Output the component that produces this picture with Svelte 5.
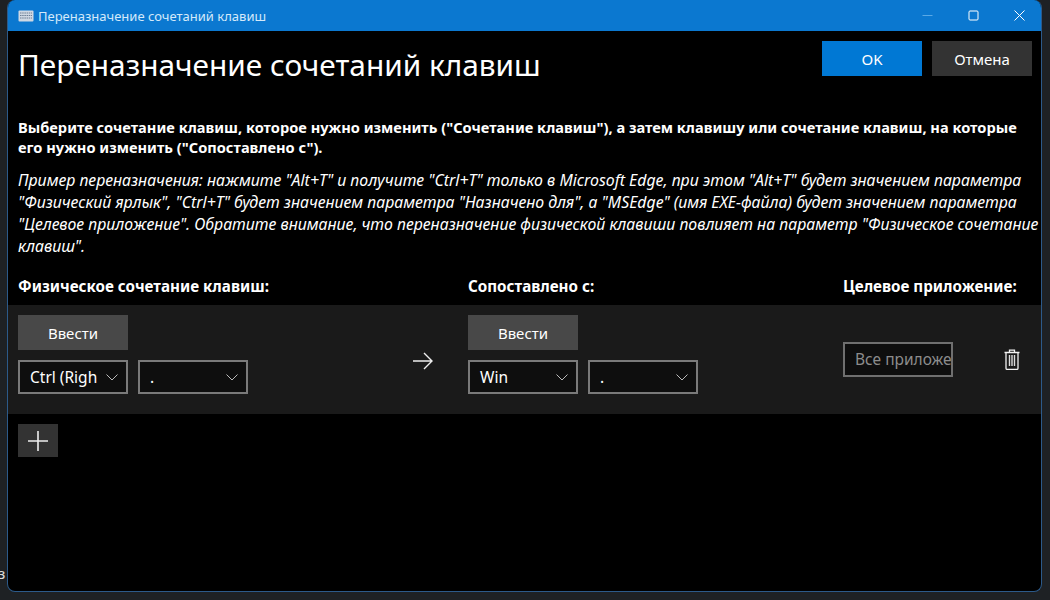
<script lang="ts">
    const rows = [
        { from: ['Ctrl (Righ', '.'], to: ['Win', '.'], app: 'Все приложения' }
    ];
</script>

<div class="desktop">
    <span class="peek">з</span>
    <div class="window">
        <header class="titlebar">
            <svg class="app-icon" width="16" height="12" viewBox="0 0 16 12">
                <rect x="0.5" y="0.5" width="15" height="11" rx="1" fill="#cfd8e3" />
                <path d="M2 3h12M2 5.5h12M2 8h12" stroke="#6d7f94" stroke-width="1" stroke-dasharray="1.5 .7" />
            </svg>
            <span class="title-text">Переназначение сочетаний клавиш</span>
            <div class="controls">
                <svg width="11" height="11" viewBox="0 0 11 11"><path d="M0.5 5.5h10" stroke="#5aa9e6" /></svg>
                <svg width="11" height="11" viewBox="0 0 11 11"><rect x="1" y="1" width="9" height="9" rx="1" fill="none" stroke="#fff" /></svg>
                <svg width="11" height="11" viewBox="0 0 11 11"><path d="M.5 .5l10 10M10.5 .5l-10 10" stroke="#fff" /></svg>
            </div>
        </header>

        <div class="content">
            <div class="head">
                <h1>Переназначение сочетаний клавиш</h1>
                <div class="actions">
                    <button class="btn primary">OK</button>
                    <button class="btn">Отмена</button>
                </div>
            </div>

            <p class="lead">Выберите сочетание клавиш, которое нужно изменить ("Сочетание клавиш"), а затем клавишу или сочетание клавиш, на которые его нужно изменить ("Сопоставлено с").</p>
            <p class="note">Пример переназначения: нажмите "Alt+T" и получите "Ctrl+T" только в Microsoft Edge, при этом "Alt+T" будет значением параметра "Физический ярлык", "Ctrl+T" будет значением параметра "Назначено для", а "MSEdge" (имя EXE-файла) будет значением параметра "Целевое приложение". Обратите внимание, что переназначение физической клавиши повлияет на параметр "Физическое сочетание клавиш".</p>

            <div class="grid labels">
                <span>Физическое сочетание клавиш:</span>
                <span></span>
                <span>Сопоставлено с:</span>
                <span>Целевое приложение:</span>
            </div>
        </div>

        {#each rows as row}
            <div class="grid band">
                <div class="keys">
                    <button class="btn enter">Ввести</button>
                    <div class="selects">
                        {#each row.from as key}
                            <div class="select">
                                <span>{key}</span>
                                <svg width="12" height="7" viewBox="0 0 12 7"><path d="M.5 .5l5.5 5.5 5.5-5.5" fill="none" stroke="#bbb" /></svg>
                            </div>
                        {/each}
                    </div>
                </div>
                <svg class="arrow" width="22" height="18" viewBox="0 0 22 18">
                    <path d="M1 9h19M12 1l8 8-8 8" fill="none" stroke="#eee" stroke-width="1.4" />
                </svg>
                <div class="keys">
                    <button class="btn enter">Ввести</button>
                    <div class="selects">
                        {#each row.to as key}
                            <div class="select">
                                <span>{key}</span>
                                <svg width="12" height="7" viewBox="0 0 12 7"><path d="M.5 .5l5.5 5.5 5.5-5.5" fill="none" stroke="#bbb" /></svg>
                            </div>
                        {/each}
                    </div>
                </div>
                <div class="target">
                    <div class="app-input"><span>{row.app}</span></div>
                    <svg class="trash" width="16" height="21" viewBox="0 0 16 21">
                        <path d="M5.5 3V1.2h5V3M0.5 3.5h15M2 4v15.2c0 .7.5 1.2 1.2 1.2h9.6c.7 0 1.2-.5 1.2-1.2V4" fill="none" stroke="#f2f2f2" stroke-width="1.3" />
                        <path d="M5.5 6v11M8 6v11M10.5 6v11" stroke="#ddd" stroke-width="1.4" />
                    </svg>
                </div>
            </div>
        {/each}

        <button class="add" aria-label="Добавить">
            <svg width="20" height="20" viewBox="0 0 20 20"><path d="M0 10h20M10 0v20" stroke="#eee" stroke-width="1.6" /></svg>
        </button>
    </div>
</div>

<style>
    :global(body) {
        margin: 0;
        background: #1e2124;
    }

    .desktop {
        position: relative;
        width: 1050px;
        height: 600px;
        overflow: hidden;
        font-family: "Noto Sans", "Open Sans", sans-serif;
        color: #fff;
    }

    .peek {
        position: absolute;
        left: -2px;
        top: 563px;
        font-size: 15px;
        color: #ddd;
    }

    .window {
        position: absolute;
        left: 7px;
        top: 0;
        width: 1035px;
        height: 592px;
        box-sizing: border-box;
        background: #000;
        border: 1px solid #2c5a8a;
        border-top: 0;
        border-radius: 8px;
        overflow: hidden;
    }

    .titlebar {
        height: 31px;
        background: #0b78d0;
        display: flex;
        align-items: center;
        padding-left: 10px;
        font-size: 13px;
        color: #d4e9fa;
    }

    .app-icon {
        margin-right: 4px;
    }

    .controls {
        margin-left: auto;
        display: flex;
        gap: 35px;
        padding-right: 16px;
    }

    .content {
        padding: 10px 0 0 10px;
    }

    .head {
        display: flex;
        justify-content: space-between;
        height: 64px;
        padding-right: 9px;
    }

    h1 {
        margin: 2px 0 0;
        font-size: 29.8px;
        font-weight: 400;
        line-height: 44px;
    }

    .actions {
        display: flex;
        gap: 10px;
    }

    .btn {
        width: 100px;
        height: 35px;
        border: 0;
        padding: 0;
        background: #333;
        color: #fff;
        font: inherit;
        font-size: 15px;
    }

    .primary {
        background: #0078d4;
    }

    p {
        margin: 0;
    }

    .lead {
        width: 1010px;
        font-size: 14.63px;
        font-weight: 700;
        line-height: 20px;
        padding-top: 12px;
    }

    .note {
        font-size: 15.85px;
        font-style: italic;
        line-height: 22px;
        padding-top: 12px;
    }

    .grid {
        display: grid;
        grid-template-columns: 240px 210px 375px 1fr;
    }

    .labels {
        margin-top: 19px;
        font-size: 15.2px;
        font-weight: 700;
        line-height: 20px;
        height: 29px;
        white-space: nowrap;
    }

    .band {
        height: 109px;
        background: #1a1a1a;
        padding: 10px 0 0 10px;
        box-sizing: border-box;
    }

    .keys {
        display: flex;
        flex-direction: column;
        gap: 10px;
    }

    .enter {
        width: 110px;
        background: #484848;
    }

    .selects {
        display: flex;
        gap: 10px;
    }

    .select {
        width: 110px;
        height: 34px;
        box-sizing: border-box;
        border: 2px solid #7a7a7a;
        background: #0e0e0e;
        display: flex;
        align-items: center;
        justify-content: space-between;
        padding: 0 8px 0 10px;
        font-size: 15.5px;
    }

    .arrow {
        margin: 37px 0 0 154px;
    }

    .target {
        display: flex;
        align-items: flex-start;
        padding-top: 27px;
    }

    .app-input {
        width: 110px;
        height: 35px;
        box-sizing: border-box;
        border: 2px solid #6f6f6f;
        background: #0e0e0e;
        padding-left: 10px;
        overflow: hidden;
        white-space: nowrap;
        font-size: 15.5px;
        line-height: 31px;
        color: #8c8c8c;
    }

    .trash {
        margin: 7px 0 0 51px;
    }

    .add {
        display: flex;
        align-items: center;
        justify-content: center;
        width: 40px;
        height: 33px;
        margin: 10px 0 0 10px;
        border: 0;
        padding: 0;
        background: #333;
    }
</style>
